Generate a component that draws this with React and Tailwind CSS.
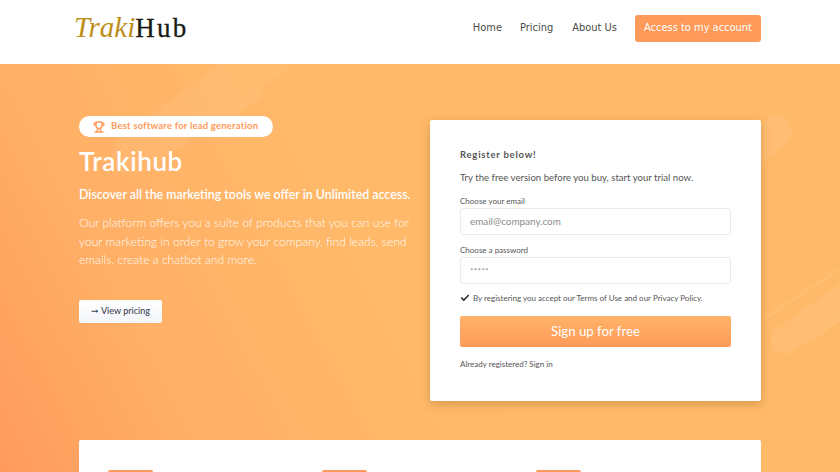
import React from 'react';
import { Trophy, Check } from 'lucide-react';

function HeroShapes() {
    return (
        <svg className="absolute inset-0 w-full h-full pointer-events-none" viewBox="0 0 840 408" fill="none" stroke="#ffffff" strokeLinecap="round">
            <path d="M218 0 L293 0 L165 95 Q120 125 112 95 Q110 85 120 75 Z" fill="#ffffff" stroke="none" opacity="0.06" />
            <path d="M232 49 L259 30" strokeWidth="8" opacity="0.07" />
            <path d="M777 67 L750 90" strokeWidth="30" opacity="0.07" />
            <path d="M785 276 L850 229" strokeWidth="28" opacity="0.07" />
            <path d="M767 253 L840 205" strokeWidth="1.5" opacity="0.1" />
            <path d="M810 277 L840 255" strokeWidth="1.5" opacity="0.14" />
        </svg>
    );
}

function Field({ label, placeholder, small }) {
    return (
        <div className="flex flex-col">
            <label className="text-[8px] leading-[14px] text-[#555555]">{label}</label>
            <div className={`h-[27px] flex items-center px-[9px] bg-white border border-[#e8eaee] rounded-[3px] text-[#8a8a8a] ${small ? 'text-[8px] tracking-[0.4px]' : 'text-[9.9px]'}`}>
                {placeholder}
            </div>
        </div>
    );
}

export default function App() {
    return (
        <div className="w-[840px] h-[472px] overflow-hidden bg-white font-['Lato','sans-serif']">
            <header className="h-16 flex items-start justify-between pl-[74px] pr-[79px] pt-[15px] bg-white">
                <a className="flex items-baseline font-['Liberation_Serif','serif'] mt-[-2px]">
                    <span className="italic text-[29px] leading-[28px] text-[#bd8e16]">Traki</span>
                    <span className="text-[27px] leading-[28px] text-[#1a1a14] tracking-[2.2px] [-webkit-text-stroke:0.3px_#1a1a14]">Hub</span>
                </a>
                <nav className="flex items-center font-['DejaVu_Sans','sans-serif'] text-[9.9px] text-[#4a4a4a]">
                    <span className="mr-[18px]">Home</span>
                    <span className="mr-[19px]">Pricing</span>
                    <span className="mr-[18px]">About Us</span>
                    <span className="h-[27px] w-[126px] flex items-center justify-center rounded-[3px] bg-[#ff9a5a] text-white">Access to my account</span>
                </nav>
            </header>

            <section className="relative h-[408px] overflow-hidden bg-[linear-gradient(62deg,#ff9a5c_0%,#ffaf66_20%,#ffb969_45%,#ffba69_100%)]">
                <HeroShapes />
                <div className="relative flex justify-between px-[79px] pt-[52px]">
                    <div className="w-[336px] text-white">
                        <div className="w-[194px] h-[21px] flex items-center pl-[14px] gap-[6px] rounded-full bg-white text-[#ff9a5a] text-[9.5px] font-bold tracking-[0.2px]">
                            <Trophy size={12} strokeWidth={2.6} />
                            Best software for lead generation
                        </div>
                        <h1 className="mt-[8px] text-[26px] leading-[32px] font-semibold tracking-[0.6px]">Trakihub</h1>
                        <p className="mt-[8px] text-[12.4px] leading-[20px] font-semibold whitespace-nowrap">Discover all the marketing tools we offer in Unlimited access.</p>
                        <p className="mt-[9px] text-[12.1px] leading-[18.5px] font-light text-white/95">
                            Our platform offers you a suite of products that you can use for your marketing in order to grow your company, find leads, send emails, create a chatbot and more.
                        </p>
                        <button className="mt-[30px] w-[83px] h-[23px] flex items-center justify-center rounded-[2px] bg-[linear-gradient(#ffffff,#f3f5f9)] text-[#3d4354] text-[9px] font-medium">
                            <span className="mr-[2px]">➞</span>View pricing
                        </button>
                    </div>

                    <div className="mt-[4px] w-[331px] h-[281px] bg-white rounded-[2px] shadow-[0_3px_10px_rgba(120,70,20,0.3)] px-[30px] pt-[28px] text-[#555555]">
                        <h2 className="text-[9.5px] leading-[14px] font-bold tracking-[0.75px]">Register below!</h2>
                        <p className="mt-[9px] text-[9.6px] leading-[14px] whitespace-nowrap">Try the free version before you buy, start your trial now.</p>
                        <div className="mt-[9px] flex flex-col gap-[8px]">
                            <Field label="Choose your email" placeholder="email@company.com" />
                            <Field label="Choose a password" placeholder="*****" small />
                        </div>
                        <div className="mt-[8px] flex items-center gap-[3px] text-[8px] leading-[12px] whitespace-nowrap">
                            <Check size={10} strokeWidth={4} className="text-[#333333]" />
                            <span>By registering you accept our Terms of Use and our Privacy Policy.</span>
                        </div>
                        <button className="mt-[12px] w-full h-[31px] rounded-[2px] bg-[linear-gradient(#ffb369,#ff9a5a)] text-white text-[13.2px]">Sign up for free</button>
                        <p className="mt-[11px] text-[8px] leading-[12px]">Already registered? Sign in</p>
                    </div>
                </div>

                <div className="absolute left-[79px] top-[376px] w-[682px] h-[80px] bg-white rounded-[2px] px-[29px] pt-[30px] grid grid-cols-[214px_214px_214px]">
                    {[0, 1, 2].map((i) => (
                        <div key={i} className="w-[45px] h-[20px] rounded-[2px] bg-[#ff9a5a]" />
                    ))}
                </div>
            </section>
        </div>
    );
}
